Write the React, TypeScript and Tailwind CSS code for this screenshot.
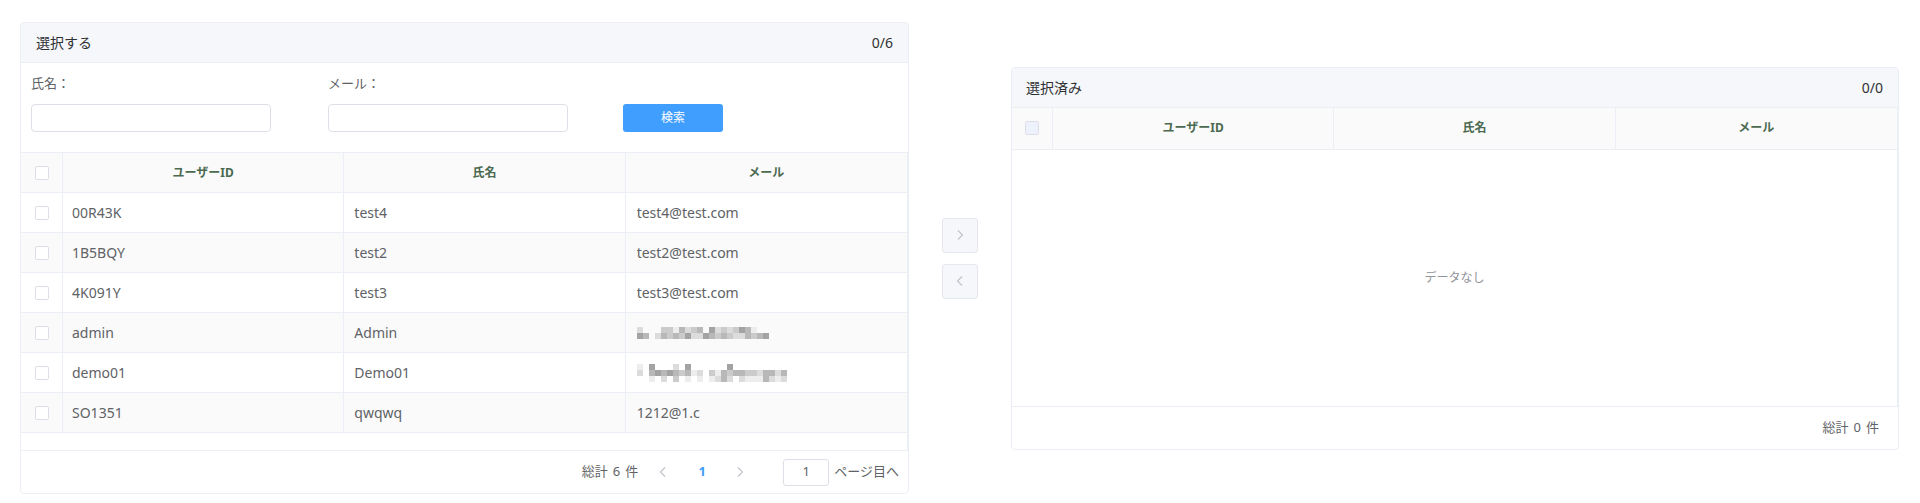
import React from "react";

const SHADES: Record<string, string> = {
  "1": "#ededed",
  "2": "#dcdcdc",
  "3": "#cbcbcb",
  "4": "#b8b8b8",
  "5": "#a3a3a3",
  "6": "#8c8c8c",
};

function Mosaic({ rows, cell = 6 }: { rows: string[]; cell?: number }) {
  const w = rows[0].length * cell;
  const h = rows.length * cell;
  return (
    <svg width={w} height={h} viewBox={`0 0 ${w} ${h}`} className="block">
      {rows.map((r, y) =>
        r.split("").map((c, x) =>
          c === "0" ? null : (
            <rect key={`${x}-${y}`} x={x * cell} y={y * cell} width={cell} height={cell} fill={SHADES[c]} />
          )
        )
      )}
    </svg>
  );
}

const mosaicAdmin = [
  "20003314234052323541000",
  "54024343522543432243450",
];
const mosaicDemo = [
  "1050002050000005000000000",
  "2045454341203143443324424",
  "0010203010101242021114212",
];

type Row = { id: string; name: string; mail: React.ReactNode };

const rows: Row[] = [
  { id: "00R43K", name: "test4", mail: "test4@test.com" },
  { id: "1B5BQY", name: "test2", mail: "test2@test.com" },
  { id: "4K091Y", name: "test3", mail: "test3@test.com" },
  { id: "admin", name: "Admin", mail: <Mosaic rows={mosaicAdmin} cell={6} /> },
  { id: "demo01", name: "Demo01", mail: <Mosaic rows={mosaicDemo} cell={6} /> },
  { id: "SO1351", name: "qwqwq", mail: "1212@1.c" },
];

function Checkbox({ disabled = false }: { disabled?: boolean }) {
  return (
    <span
      className={
        disabled
          ? "block w-[14px] h-[14px] border border-[#DCDFE6] rounded-[2px] bg-[#EDF2FC]"
          : "block w-[14px] h-[14px] border border-[#DCDFE6] rounded-[2px] bg-white"
      }
    />
  );
}

function Chevron({ dir, className }: { dir: "left" | "right"; className?: string }) {
  return (
    <svg width="12" height="12" viewBox="0 0 12 12" className={className} fill="none">
      {dir === "right" ? (
        <path d="M4 1.5 L8.5 6 L4 10.5" stroke="currentColor" strokeWidth="1.2" />
      ) : (
        <path d="M8 1.5 L3.5 6 L8 10.5" stroke="currentColor" strokeWidth="1.2" />
      )}
    </svg>
  );
}

function HeaderCells() {
  return (
    <>
      <div className="flex items-center justify-center border-r border-[#EBEEF5]">
        <span className="pl-[1px]">
          <Checkbox />
        </span>
      </div>
      <div className="flex items-center justify-center border-r border-[#EBEEF5] text-[12px] font-bold text-[#4b6a50]">ユーザーID</div>
      <div className="flex items-center justify-center border-r border-[#EBEEF5] text-[12px] font-bold text-[#4b6a50]">氏名</div>
      <div className="flex items-center justify-center text-[12px] font-bold text-[#4b6a50]">メール</div>
    </>
  );
}

export default function App() {
  return (
    <div className="w-[1920px] h-[503px] bg-white pt-[22px] font-['Noto_Sans','Noto_Sans_CJK_JP',sans-serif]">
      <div className="flex items-center h-[472px] pl-[20px]">
        {/* Left panel */}
        <div className="w-[889px] h-[472px] border border-[#EBEEF5] rounded-[4px] flex flex-col overflow-hidden">
          <div className="h-[40px] shrink-0 bg-[#F5F7FA] border-b border-[#EBEEF5] flex items-center justify-between pl-[15px] pr-[15px] text-[14px] text-[#303133]">
            <span>選択する</span>
            <span>0/6</span>
          </div>
          <div className="h-[89px] shrink-0 pt-[10px] pl-[10px] flex items-end pb-[20px]">
            <div className="w-[297px] flex flex-col">
              <label className="h-[20px] leading-[20px] text-[13px] text-[#606266]">氏名：</label>
              <input className="mt-[11px] w-[240px] h-[28px] border border-[#DCDFE6] rounded-[4px] outline-none" />
            </div>
            <div className="w-[295px] flex flex-col">
              <label className="h-[20px] leading-[20px] text-[13px] text-[#606266]">メール：</label>
              <input className="mt-[11px] w-[240px] h-[28px] border border-[#DCDFE6] rounded-[4px] outline-none" />
            </div>
            <button className="w-[100px] h-[28px] bg-[#409EFF] rounded-[3px] text-white text-[12px]">検索</button>
          </div>
          <div className="flex-1 flex flex-col border-t border-r border-b border-[#EBEEF5]">
            <div className="grid grid-cols-[42px_1fr_1fr_1fr] h-[40px] shrink-0 bg-[#FAFAFA] border-b border-[#EBEEF5]">
              <HeaderCells />
            </div>
            {rows.map((r, i) => (
              <div
                key={r.id}
                className={
                  i % 2 === 1
                    ? "grid grid-cols-[42px_1fr_1fr_1fr] h-[40px] shrink-0 bg-[#FAFAFA] border-b border-[#EBEEF5] text-[14px] text-[#606266]"
                    : "grid grid-cols-[42px_1fr_1fr_1fr] h-[40px] shrink-0 bg-white border-b border-[#EBEEF5] text-[14px] text-[#606266]"
                }
              >
                <div className="flex items-center justify-center border-r border-[#EBEEF5]">
                  <span className="pl-[1px]">
                    <Checkbox />
                  </span>
                </div>
                <div className="flex items-center pl-[9px] border-r border-[#EBEEF5]">{r.id}</div>
                <div className="flex items-center pl-[10px] border-r border-[#EBEEF5]">{r.name}</div>
                <div className="flex items-center pl-[11px]">{r.mail}</div>
              </div>
            ))}
            <div className="flex-1" />
          </div>
          <div className="h-[42px] shrink-0 flex items-center justify-end pr-[9px] text-[13px] text-[#606266]">
            <span className="flex items-center">
              <span>総計</span>
              <span className="mx-[5px]">6</span>
              <span>件</span>
            </span>
            <span className="ml-[10px] w-[30px] flex items-center justify-center text-[#C0C4CC]">
              <Chevron dir="left" />
            </span>
            <span className="ml-[6px] w-[36px] text-center font-bold text-[#409EFF]">1</span>
            <span className="ml-[5px] w-[30px] flex items-center justify-center text-[#C0C4CC]">
              <Chevron dir="right" />
            </span>
            <span className="ml-[28px] w-[46px] h-[27px] border border-[#DCDFE6] rounded-[3px] flex items-center justify-center text-[#606266]">1</span>
            <span className="ml-[5px]">ページ目へ</span>
          </div>
        </div>

        {/* Middle buttons */}
        <div className="w-[102px] flex flex-col pl-[33px] gap-[11px]">
          <button className="w-[36px] h-[35px] bg-[#F5F7FA] border border-[#E4E7ED] rounded-[3px] flex items-center justify-center text-[#C0C4CC]">
            <Chevron dir="right" />
          </button>
          <button className="w-[36px] h-[35px] bg-[#F5F7FA] border border-[#E4E7ED] rounded-[3px] flex items-center justify-center text-[#C0C4CC]">
            <Chevron dir="left" />
          </button>
        </div>

        {/* Right panel */}
        <div className="w-[888px] h-[383px] border border-[#EBEEF5] rounded-[4px] flex flex-col overflow-hidden">
          <div className="h-[40px] shrink-0 bg-[#F5F7FA] border-b border-[#EBEEF5] flex items-center justify-between pl-[14px] pr-[15px] text-[14px] text-[#303133]">
            <span>選択済み</span>
            <span>0/0</span>
          </div>
          <div className="flex-1 flex flex-col border-r border-[#EBEEF5]">
            <div className="grid grid-cols-[41px_1fr_1fr_1fr] h-[42px] shrink-0 bg-[#FAFAFA] border-b border-[#EBEEF5]">
              <div className="flex items-center justify-center border-r border-[#EBEEF5]">
                <Checkbox disabled />
              </div>
              <div className="flex items-center justify-center border-r border-[#EBEEF5] text-[12px] font-bold text-[#4b6a50]">ユーザーID</div>
              <div className="flex items-center justify-center border-r border-[#EBEEF5] text-[12px] font-bold text-[#4b6a50]">氏名</div>
              <div className="flex items-center justify-center text-[12px] font-bold text-[#4b6a50]">メール</div>
            </div>
            <div className="flex-1 flex items-center justify-center text-[12px] text-[#909399]">データなし</div>
          </div>
          <div className="h-[43px] shrink-0 border-t border-[#EBEEF5] flex items-center justify-end pr-[19px] text-[13px] text-[#606266]">
            <span>総計</span>
            <span className="mx-[5px]">0</span>
            <span>件</span>
          </div>
        </div>
      </div>
    </div>
  );
}
